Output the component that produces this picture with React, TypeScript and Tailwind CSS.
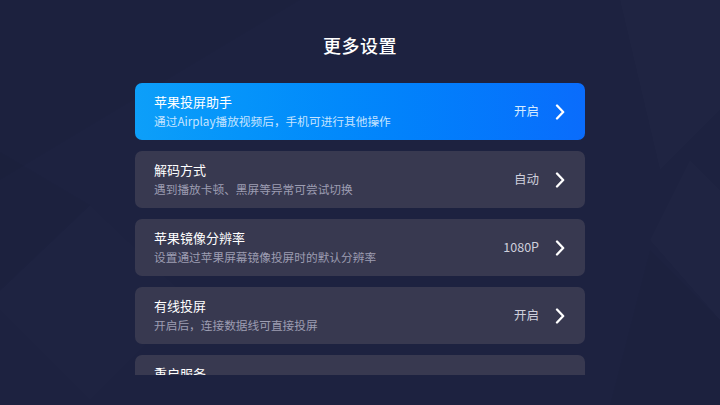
import React from "react";

type Item = { title: string; desc: string; value: string; active?: boolean };

const items: Item[] = [
  { title: "苹果投屏助手", desc: "通过Airplay播放视频后，手机可进行其他操作", value: "开启", active: true },
  { title: "解码方式", desc: "遇到播放卡顿、黑屏等异常可尝试切换", value: "自动" },
  { title: "苹果镜像分辨率", desc: "设置通过苹果屏幕镜像投屏时的默认分辨率", value: "1080P" },
  { title: "有线投屏", desc: "开启后，连接数据线可直接投屏", value: "开启" },
  { title: "重启服务", desc: "", value: "" },
];

function Chevron() {
  return (
    <svg width="10" height="16" viewBox="0 0 10 16" fill="none">
      <polyline points="2,1.5 8.2,8 2,14.5" stroke="#ffffff" strokeWidth="2.3" strokeLinecap="round" strokeLinejoin="round" />
    </svg>
  );
}

export default function App() {
  return (
    <div
      className="relative w-[720px] h-[405px] overflow-hidden bg-[#1d2240]"
      style={{ fontFamily: '"Noto Sans CJK SC", "Noto Sans", sans-serif' }}
    >
      <svg className="absolute inset-0" width="720" height="405" viewBox="0 0 720 405">
        <polygon points="90,205 190,300 90,400 -10,300" fill="#ffffff" opacity="0.008" />
        <polygon points="-20,140 90,205 -10,300" fill="#000000" opacity="0.02" />
        <polygon points="620,0 720,0 720,110 660,170" fill="#ffffff" opacity="0.01" />
        <polygon points="690,160 720,190 720,320 650,240" fill="#ffffff" opacity="0.01" />
        <polygon points="650,250 720,320 720,405 610,405" fill="#000000" opacity="0.02" />
        <polygon points="0,0 300,0 0,180" fill="#000000" opacity="0.02" />
      </svg>

      <div className="relative flex flex-col items-center">
        <h1 className="mt-[33px] text-[18px] leading-[24px] font-medium text-white tracking-[0.5px]">更多设置</h1>
        <div className="mt-[26px] w-[450px] h-[292px] overflow-hidden flex flex-col gap-[11px]">
          {items.map((it) => (
            <div
              key={it.title}
              className={
                "shrink-0 h-[57px] rounded-[7px] flex items-center pl-[19px] pr-[20px] " +
                (it.active
                  ? "bg-gradient-to-r from-[#0d9ff9] to-[#0a6cfc]"
                  : "bg-[#383950]")
              }
            >
              <div className="flex-1 flex flex-col gap-[2px] self-start pt-[10px]">
                <div className="text-[13px] leading-[18px] text-white font-normal">{it.title}</div>
                {it.desc && (
                  <div
                    className={
                      "text-[11.7px] leading-[16px] " +
                      (it.active ? "text-[#c6e4ff]" : "text-[#9d9db2]")
                    }
                  >
                    {it.desc}
                  </div>
                )}
              </div>
              {it.value && (
                <div className="flex items-center gap-[16px]">
                  <span className={"text-[12.5px] " + (it.active ? "text-[#d6ebff]" : "text-[#cfcfdb]")}>{it.value}</span>
                  <Chevron />
                </div>
              )}
            </div>
          ))}
        </div>
      </div>
    </div>
  );
}
